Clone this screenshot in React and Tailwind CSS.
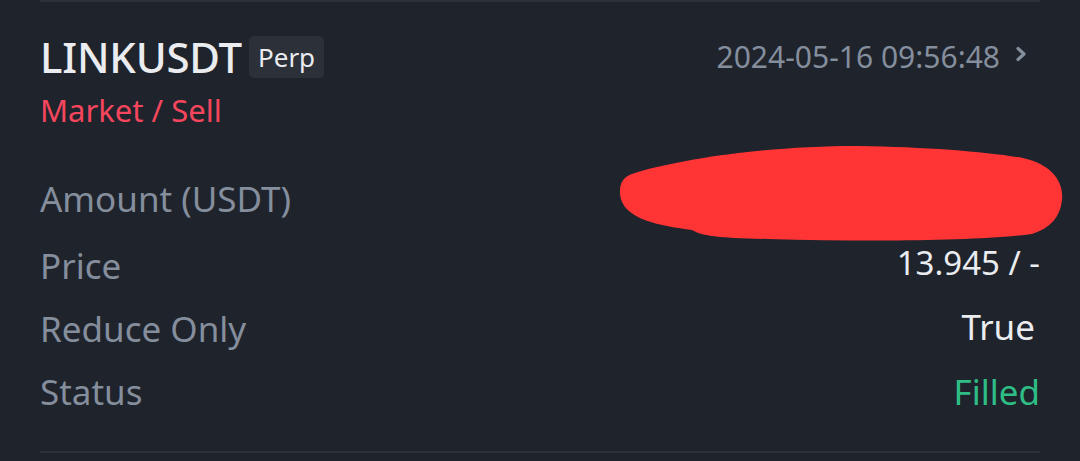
export default function App() {
  const rows = [
    { label: "Amount (USDT)", value: "", hidden: true },
    { label: "Price", value: "13.945 / -" },
    { label: "Reduce Only", value: "True" },
    { label: "Status", value: "Filled", green: true },
  ];

  return (
    <div
      className="w-[1080px] h-[461px] bg-[#1f232c] overflow-hidden"
      style={{ fontFamily: "'Noto Sans', Inter, sans-serif" }}
    >
      <div className="mx-10 h-[453px] border-t-2 border-b-2 border-[#2b3039] relative">
        {/* Header */}
        <div className="flex justify-between items-start pt-[32px]">
          <div className="flex items-center">
            <span className="text-[42px] leading-[46px] font-medium text-[#eaecef] tracking-[-0.2px]">
              LINKUSDT
            </span>
            <span className="ml-[7px] bg-[#2b3039] rounded-[5px] px-[9px] h-[42px] flex items-center text-[26px] text-[#eaecef]">
              Perp
            </span>
          </div>
          <div className="flex items-center pt-[6px] text-[#848e9c]">
            <span className="text-[30px] leading-[34px]">2024-05-16 09:56:48</span>
            <svg
              width="14"
              height="18"
              viewBox="0 0 14 18"
              className="ml-[14px] mr-[12px] mt-[-6px]"
            >
              <path
                d="M4 3.5l6 5.5-6 5.5"
                fill="none"
                stroke="#848e9c"
                strokeWidth="3.2"
                strokeLinecap="round"
                strokeLinejoin="round"
              />
            </svg>
          </div>
        </div>
        <div className="text-[31px] leading-[40px] text-[#f6465d] mt-[10px]">
          Market / Sell
        </div>

        {/* Rows */}
        <div className="mt-[38px] flex flex-col">
          {rows.map((r, i) => (
            <div
              key={r.label}
              className={
                "flex justify-between items-center h-[63px] " +
                (i === 0 ? "mb-[4px]" : "")
              }
            >
              <span className="text-[35px] text-[#848e9c]">{r.label}</span>
              {r.hidden ? null : (
                <span
                  className={
                    (i === 1 ? "text-[33px] mt-[-8px]" : "text-[35px]") +
                    (r.green ? " text-[#2ebd85]" : " text-[#eaecef]") +
                    (i === 2 ? " mr-[5px] mt-[-4px]" : "")
                  }
                >
                  {r.value}
                </span>
              )}
            </div>
          ))}
        </div>

        {/* Redaction scribble */}
        <svg
          className="absolute left-[578px] top-[140px]"
          width="446"
          height="102"
          viewBox="0 0 446 102"
        >
          <path
            d="M20 30 C70 16 150 4 240 4 C310 5 370 10 405 16 C432 22 446 38 444 58 C442 76 432 86 414 92 C360 99 260 100 150 97 C100 96 84 94 74 88 C44 84 4 78 2 52 C1 38 8 33 20 30 Z"
            fill="#ff3535"
          />
        </svg>
      </div>
    </div>
  );
}
